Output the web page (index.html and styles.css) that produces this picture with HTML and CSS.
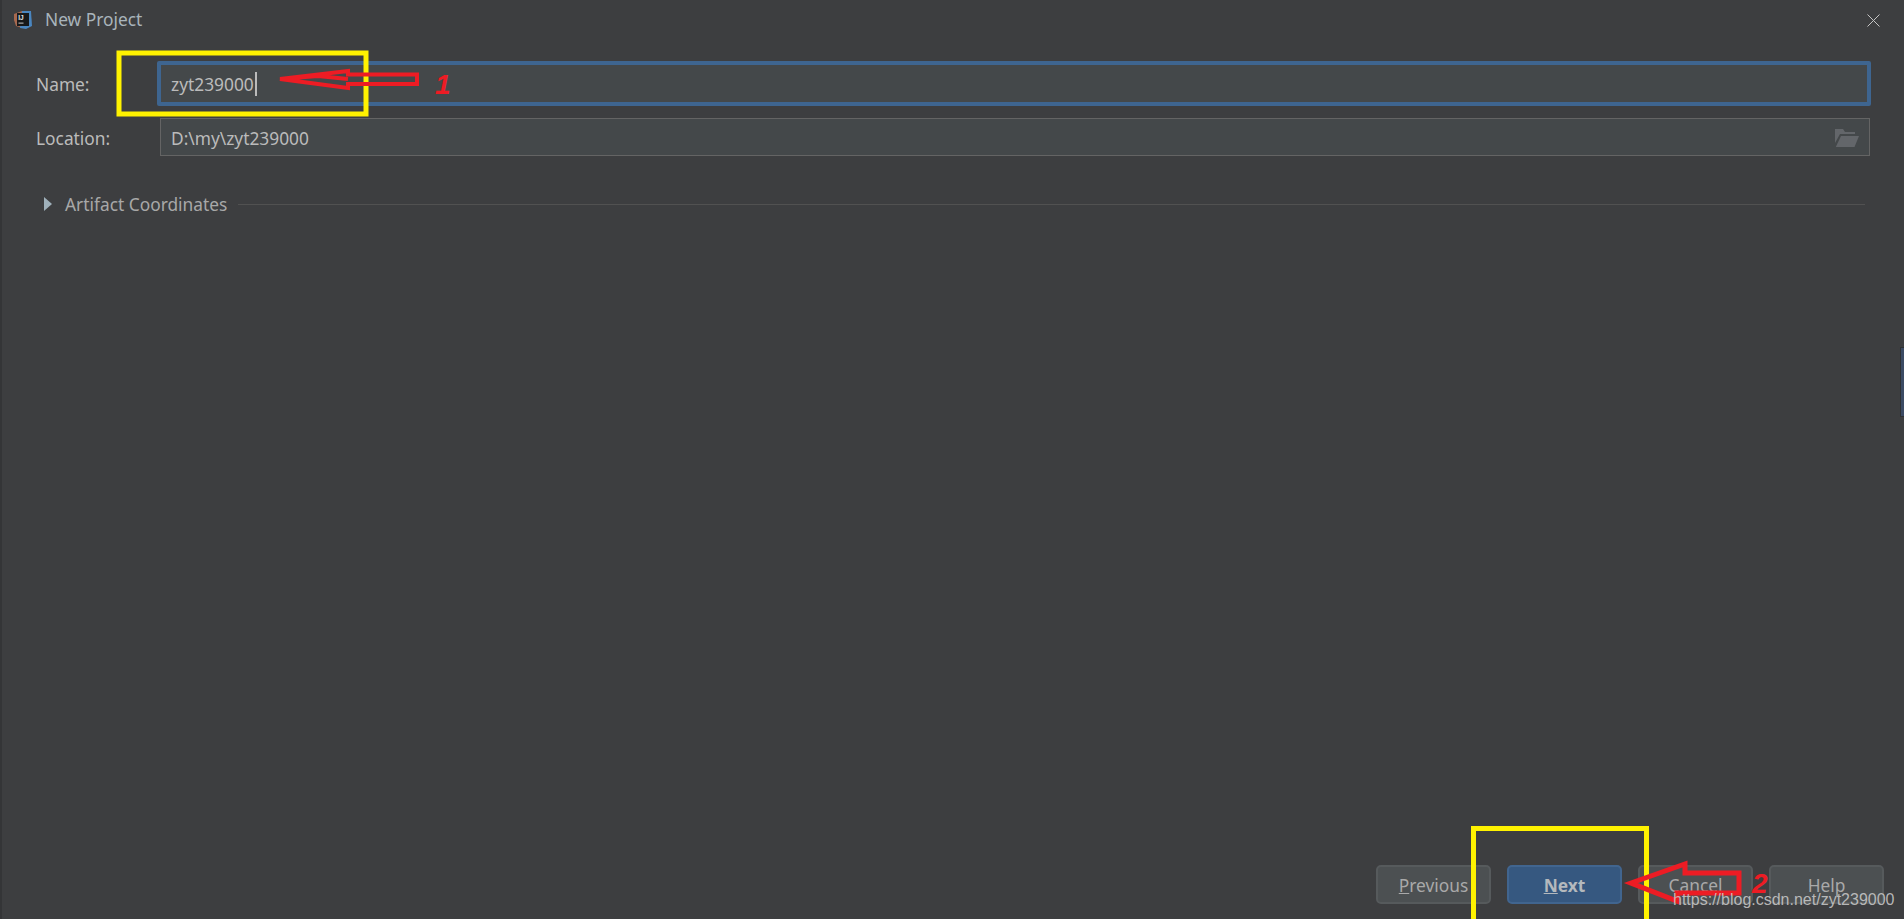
FILE: index.html
```html
<!DOCTYPE html>
<html lang="en">
<head>
<meta charset="utf-8">
<title>New Project</title>
<link rel="stylesheet" href="styles.css">
</head>
<body>
<div class="dialog">
  <header class="titlebar">
    <svg class="app-icon" viewBox="0 0 20 20" width="20" height="20" aria-hidden="true">
      <path d="M1 4 L9 1 L9 18 L3 16 L1 10 Z" fill="#a8694f"/>
      <path d="M9 1 L18 1 L19 16 L13 19 L7 18 Z" fill="#4a86c0"/>
      <rect x="4" y="3" width="12" height="13" fill="#17191b"/>
      <text class="app-icon-text" x="5.2" y="9.6">IJ</text>
      <rect x="5.5" y="12.6" width="5" height="1" fill="#c9c9c9"/>
    </svg>
    <span class="title">New Project</span>
    <svg class="close" viewBox="0 0 13 13" width="13" height="13" aria-hidden="true">
      <path d="M0.5 0.5 L12.5 12.5 M12.5 0.5 L0.5 12.5" stroke="#c5c5c5" stroke-width="1" fill="none"/>
    </svg>
  </header>

  <main class="form">
    <div class="row">
      <label class="label">Name:</label>
      <div class="field field-focus"><span>zyt239000</span><i class="caret"></i></div>
    </div>
    <div class="row">
      <label class="label label-low">Location:</label>
      <div class="field field-plain">
        <span>D:\my\zyt239000</span>
        <svg class="folder" viewBox="0 0 24 18" width="24" height="18" aria-hidden="true">
          <path d="M0 0 H8 L10 3 H20 V5 H5 L0 14 Z" fill="#63666a"/>
          <path d="M6 7 H24 L19.5 18 H0.8 Z" fill="#63666a"/>
        </svg>
      </div>
    </div>
    <div class="collapsible">
      <svg class="triangle" viewBox="0 0 8 14" width="8" height="14" aria-hidden="true"><path d="M0 0 L8 7 L0 14 Z" fill="#9fb0ba"/></svg>
      <span class="section-title">Artifact Coordinates</span>
      <span class="section-line"></span>
    </div>
  </main>

  <footer class="actions">
    <button class="btn"><u>P</u>revious</button>
    <button class="btn btn-primary"><u>N</u>ext</button>
    <button class="btn">Cancel</button>
    <button class="btn">Help</button>
  </footer>
</div>

<div class="edge-tab"></div>

<svg class="markup" viewBox="0 0 1904 919" width="1904" height="919" aria-hidden="true">
  <rect class="mark-yellow" x="119" y="53" width="247" height="61"/>
  <path class="mark-yellow" d="M1473.500 919 V828.500 H1646.500 V919"/>
  <path class="mark-red" d="M280 79 L348 71 V74.500 H417 V84 H348 V88 L318 84 L280 79 L318 76 L348 79"/>
  <path class="mark-red mark-red-thick" d="M1631 883 L1685 864 V873 H1739 V893 H1677 V901 Z"/>
  <text class="mark-num" x="435" y="94">1</text>
  <text class="mark-num" x="1752" y="893">2</text>
</svg>
<div class="watermark">https://blog.csdn.net/zyt239000</div>
</body>
</html>
```
FILE: styles.css
```css
* { box-sizing: border-box; }
html, body { margin: 0; height: 100%; overflow: hidden; }
body { background: #3d3e40; position: relative; color: #bbbbbb; font: 17.33px "Noto Sans", "Open Sans", sans-serif; }

.dialog { height: 919px; display: flex; flex-direction: column; border-left: 2px solid #343537; }

.titlebar { height: 40px; display: flex; align-items: center; padding: 0 24px 0 11px; flex: none; }
.app-icon { flex: none; }
.app-icon-text { font: 700 6.500px "Liberation Sans", sans-serif; fill: #e8e8e8; }
.title { margin-left: 12px; margin-bottom: 2px; color: #a9b4bb; }
.close { margin-left: auto; }

.form { padding: 21px 33px 0 34px; display: flex; flex-direction: column; }
.row { display: flex; align-items: center; margin-bottom: 12px; }
.label { width: 121px; flex: none; }
.label-low { padding-top: 2px; }

.field { display: flex; align-items: center; background: #44484a; color: #bbbbbb; flex: 1; }
.field-focus { height: 45px; border: 4px solid #3e6590; padding-left: 10px; border-radius: 2px; }
.field-plain { height: 38px; margin: 0 1px 0 3px; border: 1px solid #646464; padding: 2px 10px 0 10px; justify-content: space-between; }
.caret { width: 2px; height: 24px; background: #bbbbbb; margin-left: 1px; }
.folder { flex: none; }

.collapsible { display: flex; align-items: center; height: 24px; margin-top: 24px; padding-left: 8px; padding-right: 6px; }
.triangle { flex: none; }
.section-title { margin-left: 13px; color: #a8a8a8; }
.section-line { flex: 1; height: 1px; background: #515151; margin-left: 11px; }

.actions { margin-top: auto; display: flex; justify-content: flex-end; gap: 16px; padding: 0 20px 15px 0; }
.btn { width: 115px; height: 39px; background: #4c5052; border: 2px solid #565a5c; border-radius: 5px; color: #a9a9a9; font: 17.33px "Noto Sans", "Open Sans", sans-serif; padding: 0; }
.btn-primary { background: #365880; border-color: #41658f; color: #b4b9bd; font-weight: 700; }

.edge-tab { position: absolute; right: 0; top: 347px; width: 4px; height: 70px; background: #3b4a63; border: 1px solid #2f3133; border-right: 0; }

.markup { position: absolute; left: 0; top: 0; }
.mark-yellow { fill: none; stroke: #fff200; stroke-width: 5; }
.mark-red { fill: none; stroke: #ed1c24; stroke-width: 4; }
.mark-red-thick { stroke-width: 5; }
.mark-num { font: italic 700 28px "Liberation Sans", sans-serif; fill: #ed1c24; }

.watermark { position: absolute; left: 1673px; top: 891px; font: 16px "Liberation Sans", sans-serif; color: rgba(205, 205, 205, 0.85); white-space: nowrap; }
```
